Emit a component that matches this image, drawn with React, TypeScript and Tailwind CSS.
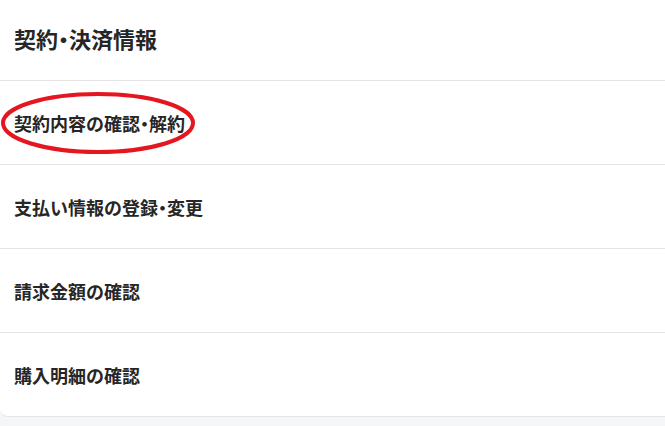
import React from 'react';

const ITEMS: React.ReactNode[] = [
    <>契約内容の確認<Dot />解約</>,
    <>支払い情報の登録<Dot />変更</>,
    <>請求金額の確認</>,
    <>購入明細の確認</>,
];

function Dot() {
    return <span className="[font-feature-settings:'palt']">・</span>;
}

export default function App() {
    return (
        <div
            className="min-h-screen bg-[#f5f6f8] text-[#262626]"
            style={{ fontFamily: '"Noto Sans CJK JP", "Noto Sans", sans-serif' }}
        >
            <div className="bg-white rounded-bl-lg border-b border-[#e4e4e4]">
                <div className="h-[81px] flex items-center px-[14px] pb-1 border-b border-[#e4e4e4]">
                    <h2 className="text-[22px] font-bold leading-none">
                        契約<Dot />決済情報
                    </h2>
                </div>
                <ul>
                    {ITEMS.map((label, i) => (
                        <li
                            key={i}
                            className={`relative flex items-center px-[14px] ${i < ITEMS.length - 1 ? 'h-[84px] border-b border-[#e4e4e4]' : 'h-[83px]'}`}
                        >
                            <span className="text-[18px] font-bold leading-none">{label}</span>
                            {i === 0 && (
                                <svg
                                    className="absolute left-0 top-[10px] pointer-events-none"
                                    width="200"
                                    height="66"
                                    viewBox="0 0 200 66"
                                >
                                    <ellipse cx="98" cy="32" rx="95" ry="29" fill="none" stroke="#e5161f" strokeWidth="4" />
                                </svg>
                            )}
                        </li>
                    ))}
                </ul>
            </div>
        </div>
    );
}
